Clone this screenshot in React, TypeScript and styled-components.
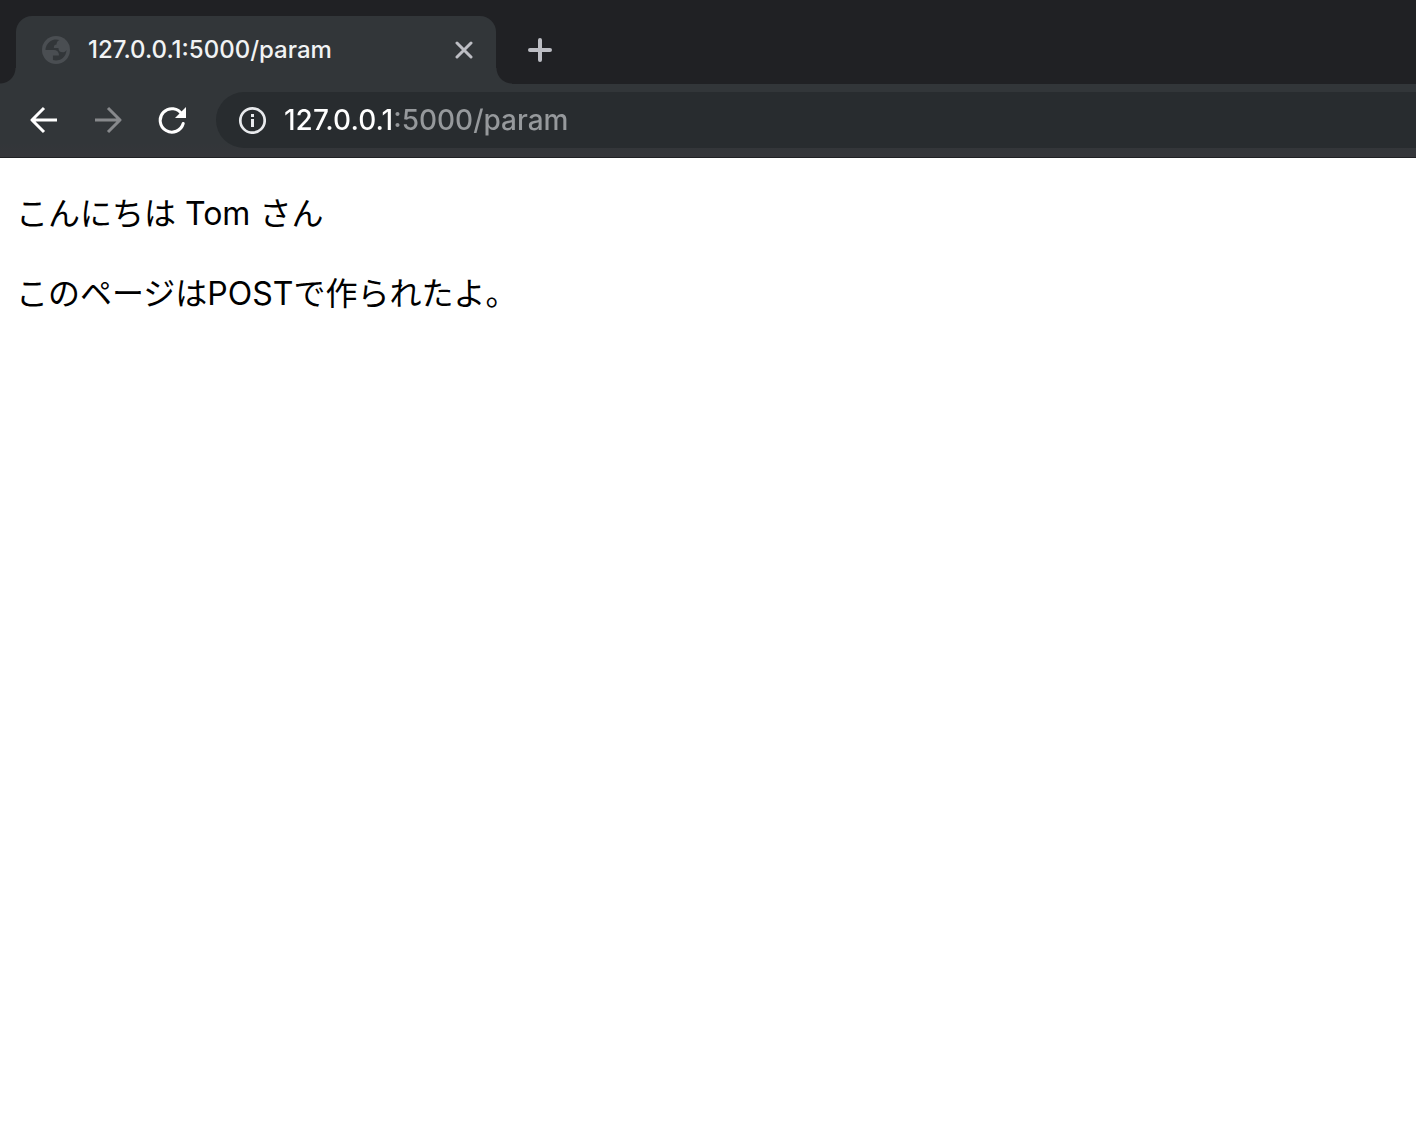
import React from "react";
import styled, { createGlobalStyle } from "styled-components";

const color = {
  strip: "#202124",
  toolbar: "#323639",
  toolbarEnd: "#35363a",
  field: "#282c2f",
  text: "#f1f3f4",
  muted: "#96999c",
};

const GlobalStyle = createGlobalStyle`
  * { box-sizing: border-box; }
  body { margin: 0; background: #fff; }
`;

const uiFont = `Inter, "Liberation Sans", sans-serif`;

const Strip = styled.nav`
  display: flex;
  align-items: flex-end;
  height: 84px;
  background: ${color.strip};
`;

const Flare = styled.span<{ $side: "left" | "right" }>`
  flex: none;
  width: 16px;
  height: 16px;
  background: radial-gradient(
    circle at ${(p) => (p.$side === "left" ? "0 0" : "100% 0")},
    transparent 15px,
    ${color.toolbar} 16px
  );
`;

const Tab = styled.div`
  display: flex;
  align-items: center;
  width: 480px;
  height: 68px;
  padding: 0 16px 0 26px;
  gap: 18px;
  border-radius: 16px 16px 0 0;
  background: ${color.toolbar};
`;

const TabTitle = styled.span`
  flex: 1;
  color: ${color.text};
  font: 500 24px/32px ${uiFont};
  white-space: nowrap;
`;

const IconButton = styled.button<{ $size: number }>`
  display: grid;
  place-items: center;
  flex: none;
  width: ${(p) => p.$size}px;
  height: ${(p) => p.$size}px;
  padding: 0;
  border: 0;
  border-radius: 50%;
  background: none;
  color: #fff;
  &:disabled { color: #87898c; }
`;

const DimButton = styled(IconButton)`
  color: #bdbec4;
`;

const NewTab = styled.div`
  display: flex;
  align-items: center;
  height: 68px;
  padding-left: 8px;
`;

const Toolbar = styled.header`
  display: flex;
  align-items: center;
  height: 74px;
  padding: 0 0 1px 16px;
  gap: 8px;
  border-bottom: 1px solid #202124;
  background: linear-gradient(${color.toolbar} 80%, ${color.toolbarEnd});
`;

const AddressBar = styled.label`
  display: flex;
  align-items: center;
  flex: 1;
  height: 56px;
  margin-left: 8px;
  padding-left: 22px;
  gap: 18px;
  border-radius: 28px 0 0 28px;
  background: ${color.field};
  color: #e8eaed;
`;

/* Width of the host part, which is drawn brighter than the port and path. */
const hostWidth = 108;

const AddressInput = styled.input`
  flex: 1;
  min-width: 0;
  height: 40px;
  padding: 0;
  border: 0;
  outline: 0;
  font: 500 28px/40px ${uiFont};
  color: transparent;
  caret-color: #fff;
  background: linear-gradient(90deg, #fff ${hostWidth}px, ${color.muted} ${hostWidth}px);
  background-clip: text;
  -webkit-background-clip: text;
`;

const Page = styled.main`
  padding: 32px 16px;
  color: #000;
  font: 400 32px/48px Inter, "Noto Sans CJK JP", sans-serif;
`;

const Paragraph = styled.p`
  margin: 0 0 32px;
`;

const Globe = () => (
  <svg width="28" height="28" viewBox="0 0 16 16" aria-hidden="true">
    <circle cx="8" cy="8" r="8" fill="#4a4e52" />
    <path
      fill="#323639"
      d="M2 8H6.300C8.600 8 9.700 9 9.700 11.200H6.250V13.700A6 6 0 0 0 14 8C13.500 8.900 12.800 9.300 11.800 9.300C10.200 9.300 9.400 8.500 9.400 6.900H6.800C6.700 5.600 7.200 4.900 8.300 4.900C8.300 3.700 8.900 2.800 10 2.350A6 6 0 0 0 2 8Z"
    />
  </svg>
);

const Arrow = ({ flip }: { flip?: boolean }) => (
  <svg width="28" height="28" viewBox="0 0 28 28" fill="none" stroke="currentColor" strokeWidth="3" strokeLinejoin="round" aria-hidden="true">
    <path d={flip ? "M1 14H26M14 2L26 14L14 26" : "M27 14H2M14 2L2 14L14 26"} />
  </svg>
);

const Reload = () => (
  <svg width="28" height="28" viewBox="0 0 28 28" aria-hidden="true">
    <path d="M24 8.500A11.700 11.700 0 1 0 25.200 17.500" fill="none" stroke="currentColor" strokeWidth="3" strokeLinecap="round" />
    <path d="M28 1V12H17Z" fill="currentColor" />
  </svg>
);

const Info = () => (
  <svg width="28" height="28" viewBox="0 0 28 28" aria-hidden="true">
    <circle cx="14.500" cy="14.500" r="12.200" fill="none" stroke="currentColor" strokeWidth="2.700" />
    <path d="M13 8H16V11H13ZM13 13H16V21H13Z" fill="currentColor" />
  </svg>
);

export default function App() {
  return (
    <>
      <GlobalStyle />
      <Strip>
        <Flare $side="left" />
        <Tab>
          <Globe />
          <TabTitle>127.0.0.1:5000/param</TabTitle>
          <DimButton $size={32} aria-label="Close tab">
            <svg width="18" height="18" viewBox="0 0 18 18" fill="none" stroke="currentColor" strokeWidth="3" strokeLinecap="round">
              <path d="M2 2L16 16M16 2L2 16" />
            </svg>
          </DimButton>
        </Tab>
        <Flare $side="right" />
        <NewTab>
          <DimButton $size={40} aria-label="New tab">
            <svg width="24" height="24" viewBox="0 0 24 24" fill="none" stroke="currentColor" strokeWidth="4" strokeLinecap="round">
              <path d="M2 12H22M12 2V22" />
            </svg>
          </DimButton>
        </NewTab>
      </Strip>
      <Toolbar>
        <IconButton $size={56} aria-label="Back"><Arrow /></IconButton>
        <IconButton $size={56} aria-label="Forward" disabled><Arrow flip /></IconButton>
        <IconButton $size={56} aria-label="Reload"><Reload /></IconButton>
        <AddressBar>
          <Info />
          <AddressInput aria-label="Address" defaultValue="127.0.0.1:5000/param" spellCheck={false} />
        </AddressBar>
      </Toolbar>
      <Page>
        <Paragraph>こんにちは Tom さん</Paragraph>
        <Paragraph>このページはPOSTで作られたよ。</Paragraph>
      </Page>
    </>
  );
}
